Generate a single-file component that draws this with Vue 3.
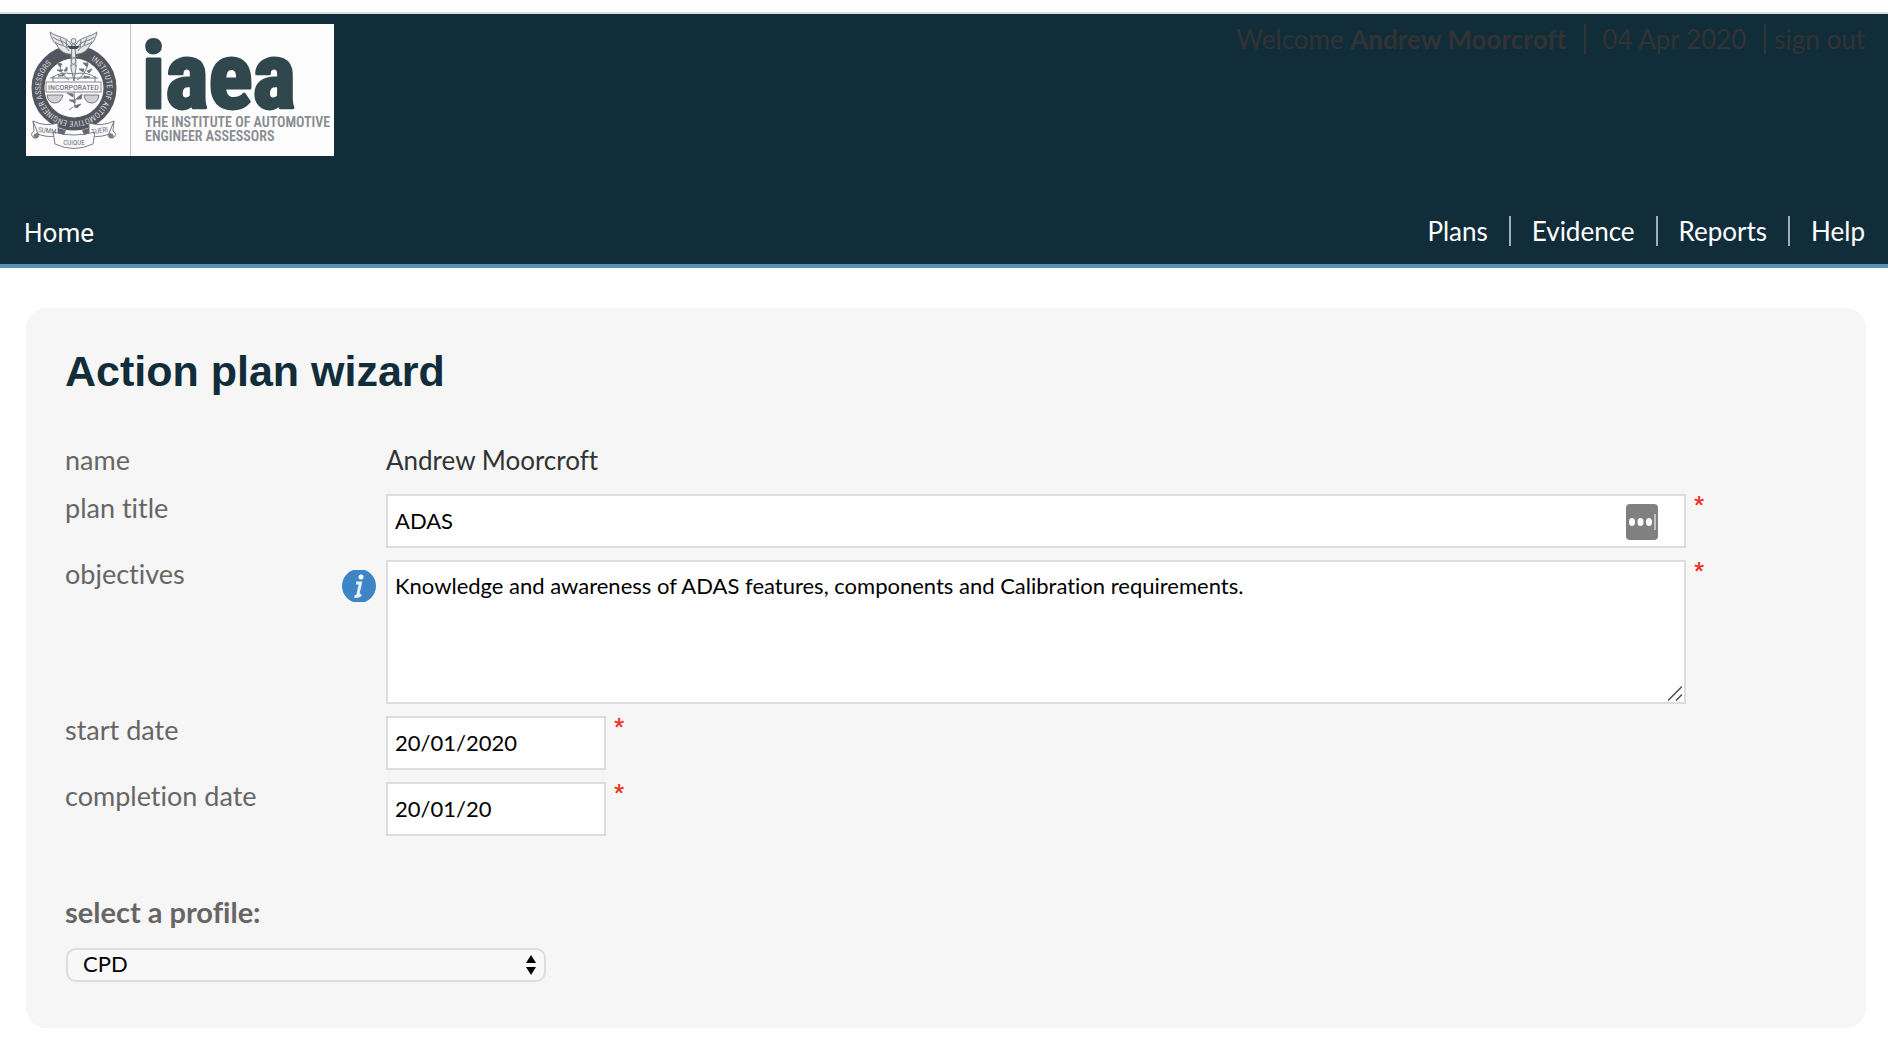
<script setup>
import { ref } from 'vue';

const navItems = ['Plans', 'Evidence', 'Reports', 'Help'];

const plan = ref({
  title: 'ADAS',
  objectives: 'Knowledge and awareness of ADAS features, components and Calibration requirements.',
  startDate: '20/01/2020',
  completionDate: '20/01/20',
  profile: 'CPD'
});
</script>

<template>
  <div class="page">
    <header class="header">
      <div class="header-top">
        <a href="#" class="logo" aria-label="Institute of Automotive Engineer Assessors">
          <svg width="308" height="132" viewBox="0 0 308 132">
            <defs>
              <path id="ring-text" d="M 65 36 A 33 33 0 1 1 29 37" />
            </defs>
            <rect width="308" height="132" fill="#fdfdfe" />
            <path d="M104.500 0V132" stroke="#c9c4c4" />

            <!-- ring with motto -->
            <circle cx="48" cy="64" r="36" fill="none" stroke="#53565f" stroke-width="13" />
            <text class="ring-label"><textPath href="#ring-text">INSTITUTE OF AUTOMOTIVE ENGINEER ASSESSORS</textPath></text>

            <!-- wings and staff -->
            <g stroke="#777b82" stroke-width="1" fill="#e6e7e9">
              <path d="M47 30C41 31 34 28 31 21C27 18 25 13 24 8C31 14 42 12 46 22Z" />
              <path d="M48 30C54 31 61 28 64 21C68 18 70 13 71 8C64 14 53 12 49 22Z" />
              <path d="M27 13C32 18 40 16 44 24M29 18C34 22 39 20 43 27M68 13C63 18 55 16 51 24M66 18C61 22 56 20 52 27" fill="none" />
              <path d="M34 14L37 21M40 16L41 24M61 14L58 21M55 16L54 24" fill="none" />
              <path d="M46 20H49L50 44L48 57L45 44Z" />
              <circle cx="47.500" cy="17" r="2.500" />
            </g>
            <path d="M41 22H54L51 25H44Z" fill="#464951" />
            <path d="M44 32C52 35 52 39 44 42M52 32C43 35 43 39 51 42" fill="none" stroke="#858990" />

            <!-- branches -->
            <g stroke="#777b82" fill="#676b73">
              <path d="M34 42Q35 51 43 56M62 40Q59 51 51 56M48 68L49 84M49 76L55 71M47 83L43 86" fill="none" />
              <path d="M34 43L31 39L36 40ZM35 48L31 46L37 46ZM37 52L32 52L39 50ZM38 47L41 43L41 47ZM61 43L57 39L62 39ZM61 47L66 45L63 49ZM58 52L64 53L58 54ZM57 48L53 45L58 45ZM47 73L41 69L47 70ZM49 79L43 76L49 76ZM50 75L56 70L55 75ZM48 82L55 80L51 84Z" />
            </g>

            <!-- scales -->
            <g stroke="#777b82" fill="none">
              <path d="M26 54Q34 47 47 50Q62 47 70 54" />
              <path d="M27 52V68M69 52V68M24 54H72" />
              <path d="M21 71H37Q35 79 29 79Q22 79 21 71ZM58 71H73Q72 79 66 79Q59 79 58 71Z" fill="#cfd1d4" />
            </g>
            <rect x="20" y="58" width="55" height="10" fill="#fafafb" stroke="#858990" />
            <text x="47.500" y="66" class="band-label">INCORPORATED</text>

            <!-- ribbon -->
            <g fill="#fafafb" stroke="#7b7e85">
              <path d="M7 97L13 112L8 114Q3 110 8 107L7 97Q19 103 32 99L32 112Q19 114 10 109" />
              <path d="M88 97L82 112L87 114Q92 110 87 107L88 97Q76 103 63 99L63 112Q76 114 85 109" />
              <path d="M27 108Q48 114 69 108L67 120Q48 129 29 120Z" />
            </g>
            <path d="M32 104L40 106L38 111L32 109ZM63 104L56 106L58 111L63 109Z" fill="#65686f" />
            <circle cx="10" cy="112" r="2.500" fill="#777b82" />
            <circle cx="85" cy="112" r="2.500" fill="#777b82" />
            <text x="21" y="109" class="ribbon-label" transform="rotate(6 21 109)">SUMM</text>
            <text x="74" y="109" class="ribbon-label" transform="rotate(-8 74 109)">TUERI</text>
            <text x="48" y="121" class="ribbon-label">CUIQUE</text>

            <text x="116" y="84" class="logo-name">iaea</text>
            <text x="119" y="103" class="logo-caption">THE INSTITUTE OF AUTOMOTIVE</text>
            <text x="119" y="117" class="logo-caption">ENGINEER ASSESSORS</text>
          </svg>
        </a>
        <div class="account">
          <span class="account-item">Welcome <strong>Andrew Moorcroft</strong></span>
          <span class="account-item">04 Apr 2020</span>
          <a href="#" class="sign-out">sign out</a>
        </div>
      </div>
      <nav class="nav">
        <a href="#" class="nav-home">Home</a>
        <div class="nav-links">
          <a v-for="item in navItems" :key="item" href="#" class="nav-link">{{ item }}</a>
        </div>
      </nav>
    </header>

    <main class="card">
      <h1 class="title">Action plan wizard</h1>
      <form @submit.prevent>
        <div class="row row-name">
          <span class="label">name</span>
          <span class="value">Andrew Moorcroft</span>
        </div>
        <div class="row">
          <label class="label" for="plan-title">plan title</label>
          <div class="field">
            <div class="control">
              <input id="plan-title" v-model="plan.title" type="text" class="input">
              <button type="button" class="fill-button" aria-label="Fill in">
                <svg width="32" height="36" viewBox="0 0 32 36">
                  <rect width="32" height="36" rx="4" fill="#808080" />
                  <ellipse cx="6" cy="18" rx="3" ry="4" fill="#fff" />
                  <ellipse cx="14.500" cy="18" rx="3" ry="4" fill="#fff" />
                  <ellipse cx="23" cy="18" rx="3" ry="4" fill="#fff" />
                  <path d="M29 10V26" stroke="#d8d8d8" stroke-width="1.500" />
                </svg>
              </button>
            </div>
            <span class="required">*</span>
          </div>
        </div>
        <div class="row">
          <div class="label label-info">
            <label for="objectives">objectives</label>
            <button type="button" class="info-button" aria-label="About objectives">
              <svg width="34" height="32" viewBox="0 0 34 32">
                <ellipse cx="17" cy="16" rx="17" ry="17" fill="#3d85c6" />
                <circle cx="19" cy="7" r="2.500" fill="#fff" />
                <path d="M14 13H18.500L15.500 26M12.500 26.500Q16 27 19 24.500" fill="none" stroke="#e8f1f9" stroke-width="3" />
              </svg>
            </button>
          </div>
          <div class="field">
            <div class="control">
              <textarea id="objectives" v-model="plan.objectives" class="input textarea"></textarea>
              <svg class="grip" width="14" height="15" viewBox="0 0 14 15">
                <path d="M0 14.500L14 0.500M8 14.500L14 8.500" stroke="#4a4a4a" stroke-width="1.500" />
              </svg>
            </div>
            <span class="required">*</span>
          </div>
        </div>
        <div class="row">
          <label class="label" for="start-date">start date</label>
          <div class="field">
            <input id="start-date" v-model="plan.startDate" type="text" class="input input-date">
            <span class="required">*</span>
          </div>
        </div>
        <div class="row">
          <label class="label" for="completion-date">completion date</label>
          <div class="field">
            <input id="completion-date" v-model="plan.completionDate" type="text" class="input input-date">
            <span class="required">*</span>
          </div>
        </div>

        <div class="profile">
          <label class="profile-label" for="profile">select a profile:</label>
          <div class="select-wrap">
            <select id="profile" v-model="plan.profile" class="select">
              <option>CPD</option>
            </select>
            <svg class="select-arrows" width="10" height="20" viewBox="0 0 10 20">
              <path d="M0 8L5 0L10 8ZM0 12L5 20L10 12Z" />
            </svg>
          </div>
        </div>
      </form>
    </main>
  </div>
</template>

<style>
body {
  margin: 0;
  background: #fff;
}
</style>

<style scoped>
.page {
  padding: 12px 0 24px;
  color: #333;
  font-family: "Trebuchet MS", Lato, sans-serif;
  font-size: 26px;
  line-height: 28px;
  font-variant-ligatures: none;
}

.header {
  border-top: 2px solid #d8dde0;
  border-bottom: 4px solid #5694b7;
  background: #112d3a;
}

.header-top {
  display: flex;
  justify-content: space-between;
  align-items: flex-start;
  padding: 10px 23px 0 26px;
}

.logo,
.logo svg {
  display: block;
}

.ring-label,
.band-label,
.ribbon-label,
.logo-name,
.logo-caption {
  font-family: "Liberation Sans Narrow", "Roboto Condensed", Roboto, sans-serif;
}

.ring-label {
  fill: #d6d8dc;
  font-size: 8px;
}

.band-label {
  fill: #5d6068;
  font-size: 8px;
  text-anchor: middle;
}

.ribbon-label {
  fill: #6c6f76;
  font-size: 7px;
  text-anchor: middle;
}

.logo-name {
  fill: #30474d;
  stroke: #30474d;
  stroke-width: 3px;
  stroke-linejoin: round;
  font-size: 92px;
  font-weight: 700;
}

.logo-caption {
  fill: #898b91;
  font-size: 14px;
  font-weight: 600;
}

.account {
  display: flex;
  line-height: 30px;
}

.account-item {
  margin-right: 8px;
  padding-right: 18px;
  border-right: 2px solid #333;
}

.account-item:first-child {
  margin-right: 16px;
}

.sign-out {
  color: #333;
  text-decoration: none;
}

.nav {
  display: flex;
  justify-content: space-between;
  align-items: flex-end;
  padding: 60px 23px 16px 24px;
  line-height: 30px;
}

.nav-home {
  color: #fff;
  font-family: Roboto, sans-serif;
  text-decoration: none;
}

.nav-links {
  display: flex;
  padding-bottom: 2px;
}

.nav-link {
  color: #fff;
  text-decoration: none;
}

.nav-link + .nav-link {
  margin-left: 21px;
  padding-left: 21px;
  border-left: 2px solid #9fadb6;
}

.card {
  margin: 40px 22px 0 26px;
  padding: 38px 160px 46px 39px;
  border-radius: 20px;
  background: #f6f6f6;
}

.title {
  margin: 0 0 50px;
  color: #112d3a;
  font-family: Arial, "Liberation Sans", sans-serif;
  font-size: 43px;
  line-height: 50px;
  font-weight: 700;
}

.row {
  display: grid;
  grid-template-columns: 321px minmax(0, 1fr);
  margin-bottom: 12px;
}

.row-name {
  min-height: 36px;
}

.label {
  color: #666;
  font-size: 27px;
}

.label-info {
  display: flex;
  justify-content: space-between;
  align-items: flex-start;
}

.info-button {
  margin: 10px 10px 0 0;
  padding: 0;
  border: none;
  background: transparent;
  cursor: pointer;
}

.info-button svg,
.fill-button svg {
  display: block;
}

.field {
  display: flex;
  align-items: flex-start;
}

.control {
  position: relative;
  flex: 1;
}

.input {
  display: block;
  box-sizing: border-box;
  width: 100%;
  height: 54px;
  margin: 0;
  padding: 6px 7px 8px;
  border: 2px solid #ddd;
  border-radius: 0;
  background: #fff;
  color: #000;
  font-family: inherit;
  font-size: 22px;
  line-height: 28px;
  font-variant-ligatures: none;
  outline: none;
}

.textarea {
  height: 144px;
  padding-top: 10px;
  resize: none;
}

.input-date {
  width: 220px;
}

.fill-button {
  position: absolute;
  top: 10px;
  right: 28px;
  padding: 0;
  border: none;
  background: transparent;
  cursor: pointer;
}

.grip {
  position: absolute;
  right: 4px;
  bottom: 3px;
  pointer-events: none;
}

.required {
  width: 12px;
  margin-left: 8px;
  color: #ee3124;
  font-family: Roboto, sans-serif;
  font-size: 22px;
  line-height: 22px;
  font-weight: 700;
}

.profile {
  margin-top: 60px;
}

.profile-label {
  display: block;
  margin-bottom: 20px;
  color: #666;
  font-size: 29px;
  line-height: 32px;
  font-weight: 700;
}

.select-wrap {
  position: relative;
  width: 480px;
  max-width: 100%;
  margin-left: 1px;
}

.select {
  display: block;
  box-sizing: border-box;
  width: 100%;
  height: 34px;
  padding: 0 32px 3px 15px;
  border: 2px solid #ddd;
  border-radius: 10px;
  appearance: none;
  background: #f8f8f8;
  color: #000;
  font-family: inherit;
  font-size: 22px;
}

.select-arrows {
  position: absolute;
  top: 7px;
  right: 10px;
  pointer-events: none;
}

@media (max-width: 900px) {
  .card {
    padding-right: 39px;
  }

  .row {
    grid-template-columns: 1fr;
    row-gap: 8px;
  }
}
</style>
